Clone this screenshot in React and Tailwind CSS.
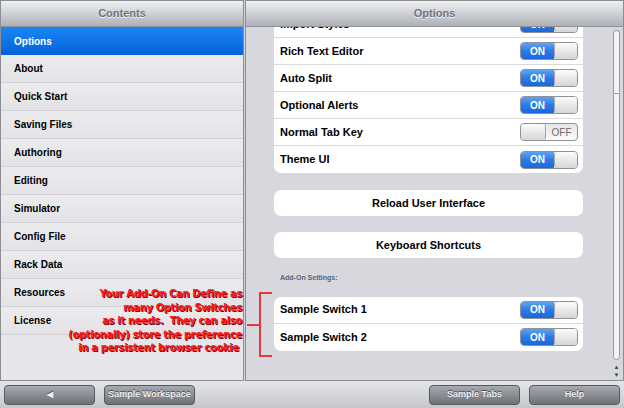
import React from "react";

const contents = [
  "Options",
  "About",
  "Quick Start",
  "Saving Files",
  "Authoring",
  "Editing",
  "Simulator",
  "Config File",
  "Rack Data",
  "Resources",
  "License",
];

const options = [
  { label: "Import Styles", on: true },
  { label: "Rich Text Editor", on: true },
  { label: "Auto Split", on: true },
  { label: "Optional Alerts", on: true },
  { label: "Normal Tab Key", on: false },
  { label: "Theme UI", on: true },
];

const Toggle = ({ on }) => {
  if (on) {
    return (
      <div className="flex h-[18px] w-[58px] overflow-hidden rounded-[4px] border border-[#8f9297]">
        <div className="flex w-[33px] items-center justify-center bg-gradient-to-b from-[#5ea2f2] via-[#2a7be6] to-[#1a68dc] text-[10px] font-bold text-white">
          ON
        </div>
        <div className="flex-1 rounded-[3px] border-l border-[#a4a6aa] bg-gradient-to-b from-[#fbfbfb] to-[#d6d6d8]" />
      </div>
    );
  }
  return (
    <div className="flex h-[18px] w-[58px] overflow-hidden rounded-[4px] border border-[#8f9297] bg-gradient-to-b from-[#e6e6e8] to-[#fafafa]">
      <div className="w-[25px] rounded-[3px] border-r border-[#a4a6aa] bg-gradient-to-b from-[#fbfbfb] to-[#d6d6d8]" />
      <div className="flex flex-1 items-center justify-center text-[10px] text-[#6b6b6b]">OFF</div>
    </div>
  );
};

const Row = ({ label, on, last }) => (
  <div
    className={`flex h-[27px] items-center justify-between pl-[6px] pr-[5px] ${
      last ? "" : "border-b border-[#d9dadd]"
    }`}
  >
    <span className="text-[11px] font-bold text-black">{label}</span>
    <Toggle on={on} />
  </div>
);

const BarButton = ({ children, className = "" }) => (
  <button
    className={`flex h-[20px] w-[91px] items-center justify-center rounded-[4px] border border-[#55585d] bg-gradient-to-b from-[#a7aab0] to-[#6e7177] text-[9px] font-bold text-[#eceef0] [text-shadow:0_-1px_0_#4a4d52] ${className}`}
  >
    {children}
  </button>
);

const App = () => {
  return (
    <div className="relative flex h-[408px] w-[624px] flex-col overflow-hidden bg-[#d0d2d6] font-['Liberation_Sans',Arial,sans-serif]">
      <div className="flex h-[381px] gap-[1px]">
        {/* left: contents */}
        <div className="flex w-[244px] flex-col border border-[#8c8e93] bg-[#e6e6ea]">
          <div className="flex h-[26px] items-center justify-center border-b border-[#8e9197] bg-gradient-to-b from-[#f0f1f3] to-[#aeb1b8] text-[11px] font-bold text-[#6e7480] [text-shadow:0_1px_0_#f4f4f6]">
            Contents
          </div>
          {contents.map((item, i) =>
            i === 0 ? (
              <div
                key={item}
                className="flex h-[28px] items-center bg-gradient-to-b from-[#1b86f6] to-[#0562d9] pl-[13px] text-[10px] font-bold text-white"
              >
                {item}
              </div>
            ) : (
              <div
                key={item}
                className="flex h-[28px] items-center border-b border-[#d2d2d6] bg-gradient-to-b from-[#ececef] to-[#e3e3e7] pl-[13px] text-[10px] font-bold text-black"
              >
                {item}
              </div>
            )
          )}
          <div className="flex-1" />
        </div>

        {/* right: options */}
        <div className="flex flex-1 flex-col border border-[#8c8e93] bg-[#d6d8dd]">
          <div className="relative z-10 flex h-[26px] items-center justify-center border-b border-[#8e9197] bg-gradient-to-b from-[#f0f1f3] to-[#aeb1b8] text-[11px] font-bold text-[#6e7480] [text-shadow:0_1px_0_#f4f4f6]">
            Options
          </div>
          <div className="flex min-h-0 flex-1">
            <div className="min-h-0 flex-1 overflow-hidden">
              <div className="-mt-[16px] flex w-[309px] flex-col ml-[28px]">
                <div className="rounded-[7px] bg-white">
                  {options.map((o, i) => (
                    <Row key={o.label} label={o.label} on={o.on} last={i === options.length - 1} />
                  ))}
                </div>
                <div className="mt-[17px] flex h-[26px] items-center justify-center rounded-[7px] bg-white text-[11px] font-bold text-black">
                  Reload User Interface
                </div>
                <div className="mt-[16px] flex h-[26px] items-center justify-center rounded-[7px] bg-white text-[11px] font-bold text-black">
                  Keyboard Shortcuts
                </div>
                <div className="mt-[15px] pl-[6px] text-[7px] font-bold text-[#5b6374]">Add-On Settings:</div>
                <div className="mt-[13px] rounded-[7px] bg-white">
                  <Row label="Sample Switch 1" on />
                  <Row label="Sample Switch 2" on last />
                </div>
              </div>
            </div>
            <div className="flex w-[13px] flex-col items-center pt-[3px]">
              <div className="h-[63px] w-[7px] rounded-t-full border border-b-0 border-[#9a9ca1] bg-[#f3f3f5]" />
              <div className="h-[267px] w-[7px] rounded-b-full border border-[#9a9ca1] bg-[#f3f3f5]" />
              <div className="mt-[3px] text-[6px] leading-[8px] text-[#444]">▲</div>
              <div className="text-[6px] leading-[8px] text-[#444]">▼</div>
            </div>
          </div>
        </div>
      </div>

      {/* bottom toolbar */}
      <div className="flex flex-1 items-center gap-[9px] bg-gradient-to-b from-[#e4e5e8] to-[#c6c8cc] px-[4px]">
        <BarButton>
          <span className="text-[8px]">◀</span>
        </BarButton>
        <BarButton className="text-[#d6d8da]">Sample Workspace</BarButton>
        <div className="flex-1" />
        <BarButton>Sample Tabs</BarButton>
        <BarButton>Help</BarButton>
      </div>

      {/* annotation overlay */}
      <div className="absolute left-[60px] top-[287px] w-[182px] text-right font-['DejaVu_Sans_Condensed','DejaVu_Sans',sans-serif] text-[11px] font-bold leading-[13.5px] tracking-[-0.3px] text-[#ff1c1c] [text-shadow:1px_1px_0_#7a0000]">
        <div>Your Add-On Can Define as</div>
        <div>many Option Switches</div>
        <div>as it needs.&nbsp; They can also</div>
        <div>(optionally) store the preference</div>
        <div>in a persistent browser cookie&nbsp;</div>
      </div>
      <div className="absolute left-[259px] top-[292px] h-[65px] w-[13px] border-y-2 border-l-2 border-[#e5383d]" />
      <div className="absolute left-[247px] top-[324px] h-[2px] w-[13px] bg-[#e5383d]" />
    </div>
  );
};

export default App;
